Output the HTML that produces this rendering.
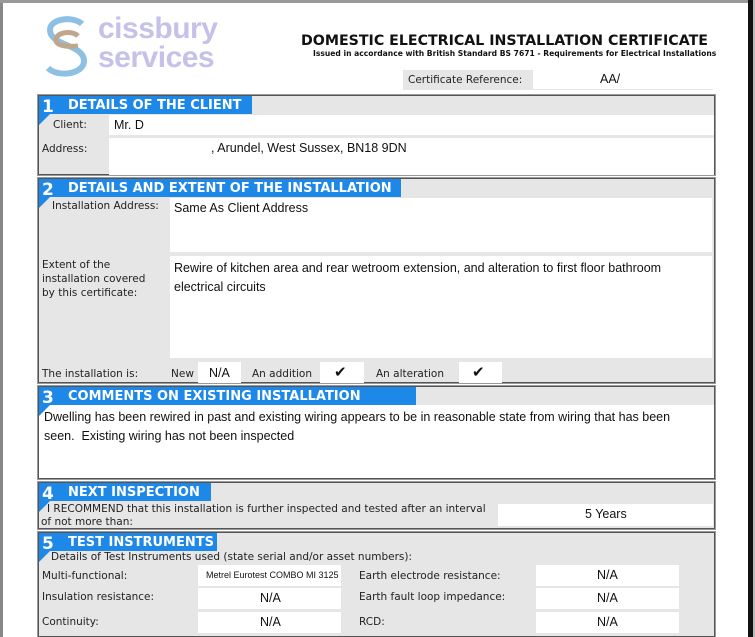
<!DOCTYPE html>
<html><head><meta charset="utf-8"><style>
*{margin:0;padding:0;box-sizing:border-box}
body{width:755px;height:637px;background:#fff;position:relative;overflow:hidden;font-family:"DejaVu Sans",sans-serif;color:#111}
.a{position:absolute}
.sec{position:absolute;left:38px;width:677px;background:#e6e6e6;border:1px solid #555;box-shadow:0 0 0 1px #999}
.hd{position:absolute;left:0;top:0;height:18px;background:#1e88e8;color:#fff;font-weight:bold;font-size:13px;line-height:19px;padding-left:29px;white-space:nowrap}
.num{position:absolute;left:3px;top:3px;color:#fff;font-weight:bold;font-size:17px;line-height:17px}
.tri{position:absolute;left:0;top:18px;width:0;height:0;border-top:11px solid #1e88e8;border-right:11px solid transparent}
.w{position:absolute;background:#fff}
.l{position:absolute;font-size:10.5px;white-space:nowrap;color:#222}
.v{position:absolute;font-family:"Liberation Sans",sans-serif;font-size:12.5px;white-space:nowrap;color:#111}
.ck{position:absolute;font-size:15px;font-weight:bold;color:#111}
</style></head><body>
<div class="a" style="left:0;top:0;width:3px;height:637px;background:#888"></div>
<div class="a" style="left:0;top:0;width:755px;height:3px;background:#999"></div>
<div class="a" style="left:748px;top:0;width:5px;height:637px;background:#111"></div>
<div class="a" style="left:753px;top:0;width:2px;height:637px;background:#bbb"></div>

<!-- logo -->
<svg class="a" style="left:44px;top:16px" width="46" height="62" viewBox="0 0 46 62">
<path d="M38 8 C30 0 6 2 6 14 C6 30 40 28 40 45 C40 58 14 62 4 52" fill="none" stroke="#8ec0e4" stroke-width="6"/>
<path d="M34 20 C28 14 12 16 12 24 C12 30 24 31 34 30" fill="none" stroke="#c0a78c" stroke-width="5"/>
</svg>
<div class="a" style="left:98px;top:14px;font-family:'Liberation Sans',sans-serif;font-weight:bold;font-size:30px;letter-spacing:-0.5px;color:#c5c1e8;line-height:29px">cissbury<br>services</div>

<div class="a" style="left:301px;top:33px;font-weight:bold;font-size:14.2px;white-space:nowrap">DOMESTIC ELECTRICAL INSTALLATION CERTIFICATE</div>
<div class="a" style="left:313px;top:49px;font-weight:bold;font-size:7.6px;white-space:nowrap">Issued in accordance with British Standard BS 7671 - Requirements for Electrical Installations</div>
<div class="a" style="left:403px;top:70px;width:310px;height:20px;background:#e6e6e6"></div>
<div class="l" style="left:408px;top:74px">Certificate Reference:</div>
<div class="w" style="left:533px;top:70px;width:180px;height:19px"></div>
<div class="v" style="left:600px;top:72px">AA/</div>

<!-- sec1 -->
<div class="sec" style="top:95px;height:80px">
 <div class="hd" style="width:213px">DETAILS OF THE CLIENT</div><div class="num">1</div><div class="tri"></div>
 <div class="w" style="left:70px;top:19px;width:605px;height:20px"></div>
 <div class="w" style="left:70px;top:42px;width:605px;height:37px"></div>
 <div class="l" style="left:14px;top:23px">Client:</div>
 <div class="l" style="left:3px;top:47px">Address:</div>
 <div class="v" style="left:75px;top:22px">Mr. D</div>
 <div class="v" style="left:172px;top:45px">, Arundel, West Sussex, BN18 9DN</div>
</div>

<!-- sec2 -->
<div class="sec" style="top:178px;height:205px">
 <div class="hd" style="width:362px">DETAILS AND EXTENT OF THE INSTALLATION</div><div class="num">2</div><div class="tri"></div>
 <div class="w" style="left:131px;top:19px;width:542px;height:54px"></div>
 <div class="w" style="left:131px;top:77px;width:542px;height:102px"></div>
 <div class="l" style="left:13px;top:21px">Installation Address:</div>
 <div class="v" style="left:135px;top:22px">Same As Client Address</div>
 <div class="l" style="left:3px;top:79px;line-height:14px">Extent of the<br>installation covered<br>by this certificate:</div>
 <div class="v" style="left:135px;top:80px;line-height:19px">Rewire of kitchen area and rear wetroom extension, and alteration to first floor bathroom<br>electrical circuits</div>
 <div class="l" style="left:3px;top:189px">The installation is:</div>
 <div class="l" style="left:132px;top:189px">New</div>
 <div class="w" style="left:159px;top:183px;width:43px;height:21px"></div>
 <div class="v" style="left:170px;top:187px">N/A</div>
 <div class="l" style="left:213px;top:189px">An addition</div>
 <div class="w" style="left:281px;top:183px;width:44px;height:21px"></div>
 <div class="ck" style="left:295px;top:184px">✔</div>
 <div class="l" style="left:337px;top:189px">An alteration</div>
 <div class="w" style="left:420px;top:183px;width:43px;height:21px"></div>
 <div class="ck" style="left:433px;top:184px">✔</div>
</div>

<!-- sec3 -->
<div class="sec" style="top:386px;height:93px">
 <div class="w" style="left:0;top:18px;width:675px;height:73px"></div>
 <div class="hd" style="width:377px">COMMENTS ON EXISTING INSTALLATION</div><div class="num">3</div><div class="tri"></div>
 <div class="v" style="left:5px;top:21px;line-height:19px">Dwelling has been rewired in past and existing wiring appears to be in reasonable state from wiring that has been<br>seen.&nbsp; Existing wiring has not been inspected</div>
</div>

<!-- sec4 -->
<div class="sec" style="top:482px;height:47px">
 <div class="hd" style="width:172px">NEXT INSPECTION</div><div class="num">4</div><div class="tri"></div>
 <div class="l" style="left:8px;top:20px">I RECOMMEND that this installation is further inspected and tested after an interval</div>
 <div class="l" style="left:2px;top:33px">of not more than:</div>
 <div class="w" style="left:459px;top:21px;width:215px;height:22px"></div>
 <div class="v" style="left:546px;top:24px">5 Years</div>
</div>

<!-- sec5 -->
<div class="sec" style="top:532px;height:105px">
 <div class="hd" style="width:178px">TEST INSTRUMENTS</div><div class="num">5</div><div class="tri"></div>
 <div class="l" style="left:12px;top:18px">Details of Test Instruments used (state serial and/or asset numbers):</div>
 <div class="l" style="left:3px;top:37px">Multi-functional:</div>
 <div class="l" style="left:3px;top:58px">Insulation resistance:</div>
 <div class="l" style="left:3px;top:83px">Continuity:</div>
 <div class="w" style="left:159px;top:32px;width:143px;height:21px"></div>
 <div class="w" style="left:159px;top:55px;width:143px;height:21px"></div>
 <div class="w" style="left:159px;top:79px;width:143px;height:21px"></div>
 <div class="a" style="left:167px;top:37px;font-family:'Liberation Sans',sans-serif;font-size:9px;white-space:nowrap">Metrel Eurotest COMBO MI 3125</div>
 <div class="v" style="left:221px;top:58px">N/A</div>
 <div class="v" style="left:221px;top:82px">N/A</div>
 <div class="l" style="left:320px;top:37px">Earth electrode resistance:</div>
 <div class="l" style="left:320px;top:58px">Earth fault loop impedance:</div>
 <div class="l" style="left:320px;top:83px">RCD:</div>
 <div class="w" style="left:497px;top:32px;width:143px;height:21px"></div>
 <div class="w" style="left:497px;top:55px;width:143px;height:21px"></div>
 <div class="w" style="left:497px;top:79px;width:143px;height:21px"></div>
 <div class="v" style="left:558px;top:35px">N/A</div>
 <div class="v" style="left:558px;top:58px">N/A</div>
 <div class="v" style="left:558px;top:82px">N/A</div>
</div>
</body></html>
